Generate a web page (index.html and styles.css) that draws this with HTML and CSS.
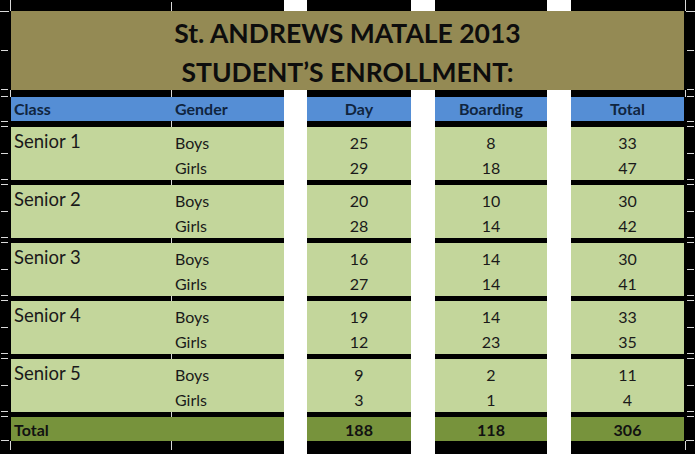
FILE: index.html
```html
<!DOCTYPE html>
<html>
<head>
<meta charset="utf-8">
<title>St. Andrews Matale 2013 - Student's Enrollment</title>
<link rel="stylesheet" href="styles.css">
</head>
<body>
<div class="sheet">
  <div class="topcell wide"></div><div class="gapcell"></div><div class="topcell"></div><div class="gapcell"></div><div class="topcell"></div><div class="gapcell"></div><div class="topcell"></div>

  <div class="title">
    <div>St. ANDREWS MATALE 2013</div>
    <div>STUDENT’S ENROLLMENT:</div>
  </div>

  <div class="section wide">
    <div class="head two"><span>Class</span><span>Gender</span></div>
    <div class="group two"><div class="cls">Senior 1</div><div class="lines"><span>Boys</span><span>Girls</span></div></div>
    <div class="group two"><div class="cls">Senior 2</div><div class="lines"><span>Boys</span><span>Girls</span></div></div>
    <div class="group two"><div class="cls">Senior 3</div><div class="lines"><span>Boys</span><span>Girls</span></div></div>
    <div class="group two"><div class="cls">Senior 4</div><div class="lines"><span>Boys</span><span>Girls</span></div></div>
    <div class="group two"><div class="cls">Senior 5</div><div class="lines"><span>Boys</span><span>Girls</span></div></div>
    <div class="total label"><span>Total</span></div>
  </div>
  <div class="gapcell"></div>

  <div class="section num">
    <div class="head">Day</div>
    <div class="group lines"><span>25</span><span>29</span></div>
    <div class="group lines"><span>20</span><span>28</span></div>
    <div class="group lines"><span>16</span><span>27</span></div>
    <div class="group lines"><span>19</span><span>12</span></div>
    <div class="group lines"><span>9</span><span>3</span></div>
    <div class="total">188</div>
  </div>
  <div class="gapcell"></div>

  <div class="section num">
    <div class="head">Boarding</div>
    <div class="group lines"><span>8</span><span>18</span></div>
    <div class="group lines"><span>10</span><span>14</span></div>
    <div class="group lines"><span>14</span><span>14</span></div>
    <div class="group lines"><span>14</span><span>23</span></div>
    <div class="group lines"><span>2</span><span>1</span></div>
    <div class="total">118</div>
  </div>
  <div class="gapcell"></div>

  <div class="section num">
    <div class="head">Total</div>
    <div class="group lines"><span>33</span><span>47</span></div>
    <div class="group lines"><span>30</span><span>42</span></div>
    <div class="group lines"><span>30</span><span>41</span></div>
    <div class="group lines"><span>33</span><span>35</span></div>
    <div class="group lines"><span>11</span><span>4</span></div>
    <div class="total">306</div>
  </div>
</div>

<svg class="ticks" width="695" height="454" viewBox="0 0 695 454" aria-hidden="true">
  <g stroke="#ffffff" stroke-width="1" fill="none" opacity="0.85">
    <path d="M0 11.5H9M1 50.5H8M1 89.5H8M1 96.5H8M1 121.5H8M1 126.5H8"/>
    <path d="M1 153.5H8M1 179.5H8M1 184.5H8M1 211.5H8M1 237.5H8M1 242.5H8M1 269.5H8M1 295.5H8M1 300.5H8M1 327.5H8M1 353.5H8M1 358.5H8M1 385.5H8M1 411.5H8M1 416.5H8M1 440.5H9"/>
    <path d="M686 11.5H695M687 50.5H694M687 89.5H694M687 96.5H694M687 121.5H694M687 126.5H694"/>
    <path d="M687 153.5H694M687 179.5H694M687 184.5H694M687 211.5H694M687 237.5H694M687 242.5H694M687 269.5H694M687 295.5H694M687 300.5H694M687 327.5H694M687 353.5H694M687 358.5H694M687 385.5H694M687 411.5H694M687 416.5H694M686 440.5H694"/>
    <path d="M10.5 0V11M171.5 2V11M685.5 0V11M10.5 90V97M171.5 90V97M685.5 90V97M171.5 121V127"/>
    <path d="M171.5 180V185M171.5 238V243M171.5 296V301M171.5 354V359M171.5 412V417"/>
    <path d="M10.5 441V450M171.5 441V450M685.5 441V450"/>
  </g>
</svg>
</body>
</html>
```

FILE: styles.css
```css
html, body {
  margin: 0;
  padding: 0;
  background: #000;
}

body {
  width: 695px;
  height: 454px;
  overflow: hidden;
  position: relative;
  font-family: Lato, "Open Sans", "Liberation Sans", sans-serif;
  color: #1a1a1a;
}

.sheet {
  display: grid;
  grid-template-columns: 160px 113px 23px 104px 24px 112px 24px 113px;
  grid-template-rows: 11px 79px 364px;
  padding: 0 11px;
  background: #000;
}

.topcell { background: #000; }
.wide { grid-column: span 2; }

.gapcell { background: #fff; }

.title {
  grid-column: 1 / -1;
  background: #948a54;
  color: #0d0d0d;
  font-weight: 700;
  font-size: 26.5px;
  line-height: 39px;
  padding-top: 3px;
  text-align: center;
}

.section {
  display: flex;
  flex-direction: column;
  padding-top: 7px;
}

.head {
  height: 24px;
  line-height: 24px;
  background: #558ed5;
  color: #10253f;
  font-weight: 700;
  font-size: 16px;
  margin-bottom: 6px;
}

.two {
  display: grid;
  grid-template-columns: 160px 1fr;
}

.head.two span { padding-left: 3px; }
.head.two span + span { padding-left: 4px; }

.group {
  height: 53px;
  background: #c3d69b;
  margin-bottom: 5px;
  box-sizing: border-box;
  font-size: 16px;
}

.cls {
  font-size: 18.5px;
  line-height: 25px;
  padding: 2px 0 0 3px;
}

.lines {
  display: flex;
  flex-direction: column;
  padding-top: 3px;
  line-height: 25px;
}

.two .lines { padding-left: 4px; }

.total {
  height: 24px;
  line-height: 26px;
  background: #77933c;
  color: #111;
  font-weight: 700;
  font-size: 16px;
}

.total.label { padding-left: 3px; }

.num { text-align: center; }
.num .lines { align-items: center; }

.ticks {
  position: absolute;
  left: 0;
  top: 0;
  pointer-events: none;
}
```
